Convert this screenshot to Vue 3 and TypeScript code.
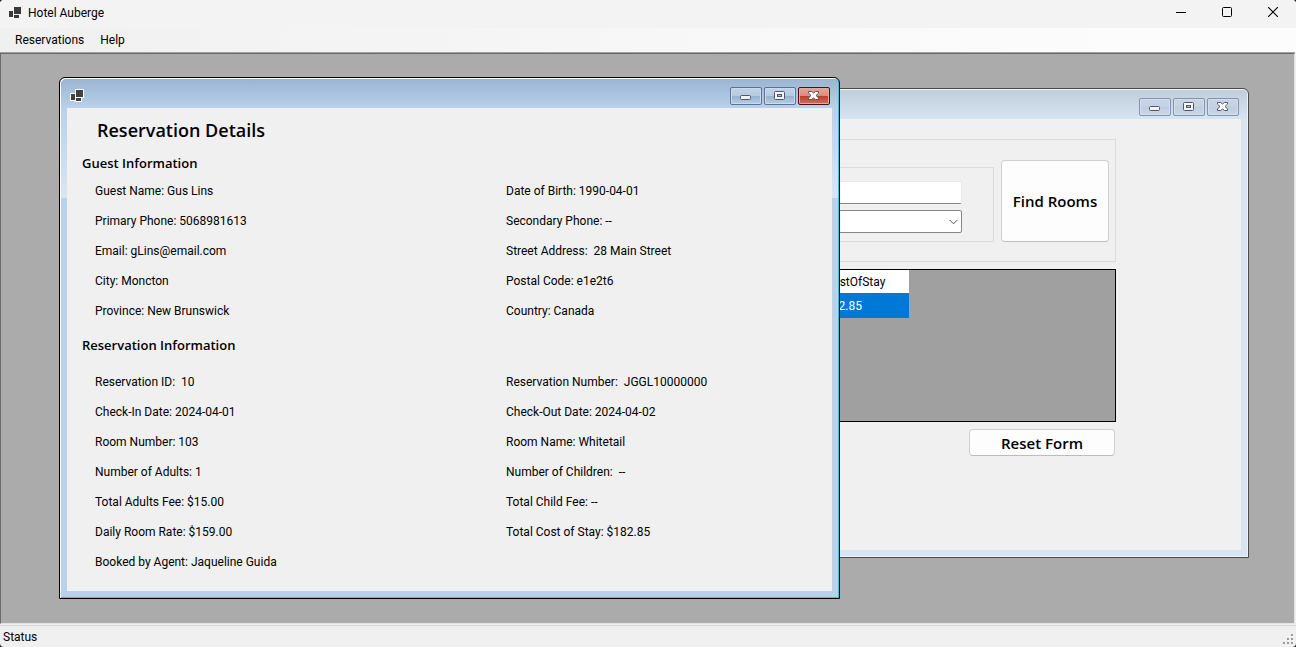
<script setup lang="ts">
interface Detail {
  label: string
  value: string
}

const guestDetails: Detail[] = [
  { label: 'Guest Name: ', value: 'Gus Lins' },
  { label: 'Date of Birth: ', value: '1990-04-01' },
  { label: 'Primary Phone: ', value: '5068981613' },
  { label: 'Secondary Phone: ', value: '--' },
  { label: 'Email: ', value: 'gLins@email.com' },
  { label: 'Street Address:  ', value: '28 Main Street' },
  { label: 'City: ', value: 'Moncton' },
  { label: 'Postal Code: ', value: 'e1e2t6' },
  { label: 'Province: ', value: 'New Brunswick' },
  { label: 'Country: ', value: 'Canada' },
]

const reservationDetails: Detail[] = [
  { label: 'Reservation ID:  ', value: '10' },
  { label: 'Reservation Number:  ', value: 'JGGL10000000' },
  { label: 'Check-In Date: ', value: '2024-04-01' },
  { label: 'Check-Out Date: ', value: '2024-04-02' },
  { label: 'Room Number: ', value: '103' },
  { label: 'Room Name: ', value: 'Whitetail' },
  { label: 'Number of Adults: ', value: '1' },
  { label: 'Number of Children:  ', value: '--' },
  { label: 'Total Adults Fee: ', value: '$15.00' },
  { label: 'Total Child Fee: ', value: '--' },
  { label: 'Daily Room Rate: ', value: '$159.00' },
  { label: 'Total Cost of Stay: ', value: '$182.85' },
  { label: 'Booked by Agent: ', value: 'Jaqueline Guida' },
]

const captionActions = ['Minimize', 'Maximize', 'Close']
const childWindows = ['search', 'details'] as const
</script>

<template>
  <div class="app">
    <header class="titlebar">
      <svg class="app-icon" width="12" height="11" viewBox="0 0 12 11" shape-rendering="crispEdges">
        <path d="M0 4h4v6H0zM5 0h7v7H5zM5 8h5v3H5z" fill="#3a3a3a" />
      </svg>
      <span class="app-title">Hotel Auberge</span>
      <div class="system-buttons">
        <button type="button" aria-label="Minimize">
          <svg width="10" height="10" viewBox="0 0 10 10"><path d="M0 5.5h10" stroke="#000" /></svg>
        </button>
        <button type="button" aria-label="Maximize">
          <svg width="10" height="10" viewBox="0 0 10 10">
            <rect x=".5" y=".5" width="9" height="9" rx="1" fill="none" stroke="#000" />
          </svg>
        </button>
        <button type="button" aria-label="Close">
          <svg width="10" height="10" viewBox="0 0 10 10">
            <path d="M0 0l10 10M10 0L0 10" stroke="#000" stroke-width="1.1" />
          </svg>
        </button>
      </div>
    </header>

    <nav class="menu">
      <button type="button">Reservations</button>
      <button type="button">Help</button>
    </nav>

    <main class="workspace">
      <section v-for="kind in childWindows" :key="kind" class="child" :class="kind">
        <div class="child-bar">
          <svg class="child-icon" width="14" height="13" viewBox="-1 -1 14 13" shape-rendering="crispEdges">
            <path d="M-1 3h5v-4h9v9h-2v4H4v-1h-5z" fill="#fff" />
            <path d="M0 4h4v6H0zM5 0h7v7H5zM5 8h5v3H5z" fill="#404040" />
          </svg>
          <div class="captions">
            <button
              v-for="action in captionActions"
              :key="action"
              type="button"
              class="caption"
              :class="action.toLowerCase()"
              :aria-label="action"
            >
              <svg width="11" height="9" viewBox="0 0 11 9">
                <rect
                  v-if="action === 'Minimize'"
                  x=".5" y="4.5" width="10" height="4" rx="1" fill="#f2f2f2" stroke="#53566b"
                />
                <template v-else-if="action === 'Maximize'">
                  <rect x=".5" y=".5" width="10" height="8" rx="1" fill="#f6f6f6" stroke="#53566b" />
                  <rect x="3.5" y="3.5" width="4" height="2" fill="#a9bdd6" stroke="#53566b" />
                </template>
                <path
                  v-else
                  d="M.5.5h3l2 1.5 2-1.5h3v1.6L8 4.5l2.5 2.4v1.6h-3l-2-1.5-2 1.5h-3V6.9L3 4.5.5 2.1z"
                  fill="#fff" stroke="#53566b" stroke-linejoin="round"
                />
              </svg>
            </button>
          </div>
        </div>

        <div v-if="kind === 'search'" class="client search-client">
          <div class="group criteria">
            <div class="group fields">
              <input type="text" aria-label="Guests" />
              <div class="select-wrap">
                <select aria-label="Room type"><option></option></select>
                <svg width="9" height="6" viewBox="0 0 9 6">
                  <path d="M.5.8l4 4 4-4" fill="none" stroke="#555" />
                </svg>
              </div>
            </div>
            <button type="button" class="push find">Find Rooms</button>
          </div>
          <div class="grid-view">
            <table>
              <thead><tr><th>CostOfStay</th></tr></thead>
              <tbody><tr><td>182.85</td></tr></tbody>
            </table>
          </div>
          <button type="button" class="push reset">Reset Form</button>
        </div>

        <div v-else class="client details-client">
          <h1>Reservation Details</h1>
          <h2>Guest Information</h2>
          <div class="details-grid">
            <p v-for="item in guestDetails" :key="item.label">{{ item.label + item.value }}</p>
          </div>
          <h2>Reservation Information</h2>
          <div class="details-grid lower">
            <p v-for="item in reservationDetails" :key="item.label">{{ item.label + item.value }}</p>
          </div>
        </div>
      </section>
    </main>

    <footer class="status">
      <span>Status</span>
      <svg width="10" height="10" viewBox="0 0 10 10" shape-rendering="crispEdges">
        <path d="M9 1h1v2H9zM5 5h1v2H5zM9 5h1v2H9zM1 9h2v1H1zM5 9h1v1H5zM9 9h1v1H9z" fill="#fff" />
        <path d="M8 0h2v2H8zM4 4h2v2H4zM8 4h2v2H8zM0 8h2v2H0zM4 8h2v2H4zM8 8h2v2H8z" fill="#9a9a9a" />
      </svg>
    </footer>
  </div>
</template>

<style>
html {
  background: #222;
}
body {
  margin: 0;
}
</style>

<style scoped>
* {
  box-sizing: border-box;
}
.app {
  display: flex;
  flex-direction: column;
  height: 100vh;
  overflow: hidden;
  border-radius: 4px;
  background: #f0f0f0;
  color: #000;
  font: 12px/16px Roboto, "Open Sans", sans-serif;
}
button,
input,
select {
  margin: 0;
  padding: 0;
  font: inherit;
  color: inherit;
}
svg {
  display: block;
}

.titlebar {
  display: flex;
  flex: none;
  align-items: center;
  height: 28px;
  padding-left: 9px;
  background: #f3f3f3;
}
.app-icon {
  margin-bottom: 4px;
}
.app-title {
  margin: 0 auto 2px 7px;
}
.system-buttons {
  display: flex;
  height: 24px;
  margin-bottom: 4px;
}
.system-buttons button {
  display: grid;
  place-items: center;
  width: 46px;
  border: 0;
  background: none;
}

.menu {
  display: flex;
  flex: none;
  height: 24px;
  padding-left: 7px;
  background: linear-gradient(90deg, #f0f0f0, #fcfcfc 85%);
}
.menu button {
  padding: 0 8px;
  border: 0;
  background: none;
}

.workspace {
  position: relative;
  flex: 1;
  overflow: hidden;
  margin-right: 1px;
  border: 1px solid #696969;
  border-right-color: #e3e3e3;
  border-bottom-color: #e3e3e3;
  background: #ababab;
  box-shadow: 0 -1px #a0a0a0;
  margin-top: 1px;
}

.child {
  position: absolute;
  display: flex;
  flex-direction: column;
  border: 1px solid #000;
  border-radius: 6px 6px 0 0;
  padding: 1px 7px 7px;
}
.search {
  top: 34px;
  left: 599px;
  width: 649px;
  height: 470px;
  border-color: #4a4a4a;
  background: linear-gradient(#bfcddb, #d7e4f2 30px);
  box-shadow: inset 0 0 0 1px #eef3f8;
}
.details {
  top: 23px;
  left: 58px;
  width: 781px;
  background:
    linear-gradient(#b9d1ea, #d8e6f4) 1px 30px / calc(100% - 2px) 90px no-repeat,
    linear-gradient(#99b4d1, #b9d1ea 30px);
  box-shadow: inset 1px 1px #fff, inset -1px -1px #35c5e4;
}
.child-bar {
  display: flex;
  flex: none;
  justify-content: space-between;
  height: 29px;
  padding: 8px 2px 0 3px;
}
.child-icon {
  margin-top: 2px;
}
.captions {
  display: flex;
  gap: 2px;
}
.caption {
  display: grid;
  place-items: center;
  width: 32px;
  height: 18px;
  padding: 0 1px 1px 0;
  border: 1px solid #8494b0;
  border-radius: 2px;
  background: linear-gradient(#c7d5e5, #c3d1e2 50%, #bccbdf 50%, #cbd9ea);
  box-shadow: inset 0 0 0 1px #d3dfec;
}
.details .caption {
  border-color: #5d7191;
  background: linear-gradient(#c0d2e6, #b5cae1 50%, #96b1cf 50%, #b7cfe8);
  box-shadow: inset 0 0 0 1px #cbdcee;
}
.details .close {
  border-color: #4c1118;
  background: linear-gradient(#e8a598, #dc8b7c 50%, #b83e27 50%, #d3705b);
  box-shadow: inset 0 0 0 1px #e6a99e;
}
.client {
  flex: 1;
  background: #f0f0f0;
}

.search-client {
  display: flex;
  flex-direction: column;
  align-items: flex-end;
  padding: 20px 125px 0 20px;
}
.group {
  border: 1px solid #dcdcdc;
}
.criteria {
  display: flex;
  align-items: flex-start;
  align-self: stretch;
  height: 123px;
  padding: 20px 6px 0 8px;
}
.fields {
  display: flex;
  flex: 1;
  flex-direction: column;
  gap: 6px;
  height: 75px;
  margin: 7px 7px 0 0;
  padding: 13px 31px 0 20px;
}
.fields input {
  height: 23px;
  border: 1px solid #e8e8e8;
  border-bottom-color: #868686;
  border-radius: 2px;
  background: #fff;
}
.select-wrap {
  display: grid;
  align-items: center;
}
.select-wrap > * {
  grid-area: 1 / 1;
}
.select-wrap select {
  width: 100%;
  height: 23px;
  border: 1px solid #868686;
  border-radius: 2px;
  background: #fff;
  appearance: none;
}
.select-wrap svg {
  justify-self: end;
  margin-right: 4px;
  pointer-events: none;
}
.push {
  border: 1px solid #d0d0d0;
  border-bottom-color: #bcbcbc;
  border-radius: 4px;
  background: #fdfdfd;
  font-family: "Open Sans", "Noto Sans", sans-serif;
  font-size: 15px;
  font-weight: 600;
}
.find {
  width: 108px;
  height: 82px;
}
.grid-view {
  align-self: stretch;
  height: 153px;
  margin-top: 7px;
  border: 1px solid #000;
  background: #a0a0a0;
}
.grid-view table {
  width: 280px;
  border-collapse: collapse;
}
.grid-view th,
.grid-view td {
  padding: 0 0 0 196px;
  text-align: left;
  font-weight: 400;
}
.grid-view th {
  height: 23px;
  background: #fff;
}
.grid-view td {
  height: 25px;
  background: #0078d7;
  color: #fff;
}
.reset {
  width: 146px;
  height: 27px;
  margin: 7px 1px 0 0;
}

.details-client {
  padding: 8px 0 14px 15px;
}
h1,
h2,
p {
  margin: 0;
}
h1,
h2 {
  font-family: "Open Sans", "Noto Sans", sans-serif;
}
h1 {
  padding-left: 15px;
  font-size: 18px;
  font-weight: 600;
  line-height: 28px;
}
h2 {
  font-size: 13px;
  font-weight: 600;
  line-height: 20px;
}
h1 + h2 {
  margin-top: 9px;
}
.details-grid {
  display: grid;
  grid-template-columns: 411px 1fr;
  margin: 3px 0 9px 13px;
}
.details-grid.lower {
  margin: 12px 0 0 13px;
}
.details-grid p {
  line-height: 30px;
  white-space: pre;
}

.status {
  display: flex;
  flex: none;
  align-items: center;
  justify-content: space-between;
  height: 22px;
  margin-top: 1px;
  padding: 0 3px;
  border-top: 1px solid #d7d7d7;
}
.status svg {
  align-self: flex-end;
  margin-bottom: 3px;
}
</style>
